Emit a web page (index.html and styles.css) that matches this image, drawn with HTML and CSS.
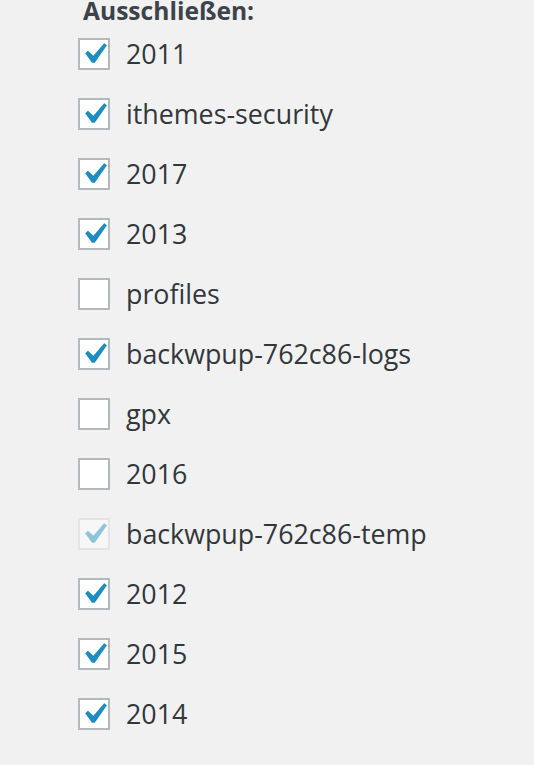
FILE: index.html
```html
<!DOCTYPE html>
<html lang="de">
<head>
<meta charset="utf-8">
<link rel="stylesheet" href="styles.css">
</head>
<body>
<div class="panel">
  <div class="title">Ausschließen:</div>
  <ul class="list">
    <li class="row"><span class="box checked"><svg viewBox="0 0 20 20"><path d="M14.83 4.89l1.34.94-5.81 8.38H9.02L5.78 9.67l1.34-1.25 2.57 2.4z"/></svg></span><span class="label">2011</span></li>
    <li class="row"><span class="box checked"><svg viewBox="0 0 20 20"><path d="M14.83 4.89l1.34.94-5.81 8.38H9.02L5.78 9.67l1.34-1.25 2.57 2.4z"/></svg></span><span class="label">ithemes-security</span></li>
    <li class="row"><span class="box checked"><svg viewBox="0 0 20 20"><path d="M14.83 4.89l1.34.94-5.81 8.38H9.02L5.78 9.67l1.34-1.25 2.57 2.4z"/></svg></span><span class="label">2017</span></li>
    <li class="row"><span class="box checked"><svg viewBox="0 0 20 20"><path d="M14.83 4.89l1.34.94-5.81 8.38H9.02L5.78 9.67l1.34-1.25 2.57 2.4z"/></svg></span><span class="label">2013</span></li>
    <li class="row"><span class="box"></span><span class="label">profiles</span></li>
    <li class="row"><span class="box checked"><svg viewBox="0 0 20 20"><path d="M14.83 4.89l1.34.94-5.81 8.38H9.02L5.78 9.67l1.34-1.25 2.57 2.4z"/></svg></span><span class="label">backwpup-762c86-logs</span></li>
    <li class="row"><span class="box"></span><span class="label">gpx</span></li>
    <li class="row"><span class="box"></span><span class="label">2016</span></li>
    <li class="row"><span class="box checked disabled"><svg viewBox="0 0 20 20"><path d="M14.83 4.89l1.34.94-5.81 8.38H9.02L5.78 9.67l1.34-1.25 2.57 2.4z"/></svg></span><span class="label">backwpup-762c86-temp</span></li>
    <li class="row"><span class="box checked"><svg viewBox="0 0 20 20"><path d="M14.83 4.89l1.34.94-5.81 8.38H9.02L5.78 9.67l1.34-1.25 2.57 2.4z"/></svg></span><span class="label">2012</span></li>
    <li class="row"><span class="box checked"><svg viewBox="0 0 20 20"><path d="M14.83 4.89l1.34.94-5.81 8.38H9.02L5.78 9.67l1.34-1.25 2.57 2.4z"/></svg></span><span class="label">2015</span></li>
    <li class="row"><span class="box checked"><svg viewBox="0 0 20 20"><path d="M14.83 4.89l1.34.94-5.81 8.38H9.02L5.78 9.67l1.34-1.25 2.57 2.4z"/></svg></span><span class="label">2014</span></li>
  </ul>
</div>
</body>
</html>
```
FILE: styles.css
```css
html, body {
  margin: 0;
  padding: 0;
  background: #f1f1f1;
}
body {
  font-family: "Open Sans", "Noto Sans", sans-serif;
  color: #32373c;
  overflow: hidden;
  height: 765px;
}
.panel {
  padding-left: 78px;
}
.title {
  font-weight: 700;
  font-size: 24.6px;
  line-height: 30px;
  margin-top: -4px;
  margin-bottom: -2px;
  padding-left: 5px;
  color: #3c434a;
}
.list {
  list-style: none;
  margin: 0;
  padding: 0;
}
.row {
  display: flex;
  align-items: center;
  height: 60px;
}
.box {
  box-sizing: border-box;
  width: 32px;
  height: 32px;
  border: 2px solid #b4b9be;
  background: #fff;
  display: flex;
  align-items: center;
  justify-content: center;
  flex: none;
}
.box svg {
  width: 42px;
  height: 42px;
  fill: #1e8cbe;
  flex: none;
}
.box.disabled {
  background: #f7f7f7;
  border-color: #e2e4e6;
}
.box.disabled svg {
  fill: #8ec4d8;
}
.label {
  margin-left: 16px;
  font-size: 26.8px;
  line-height: 32px;
  color: #32373c;
}
```
